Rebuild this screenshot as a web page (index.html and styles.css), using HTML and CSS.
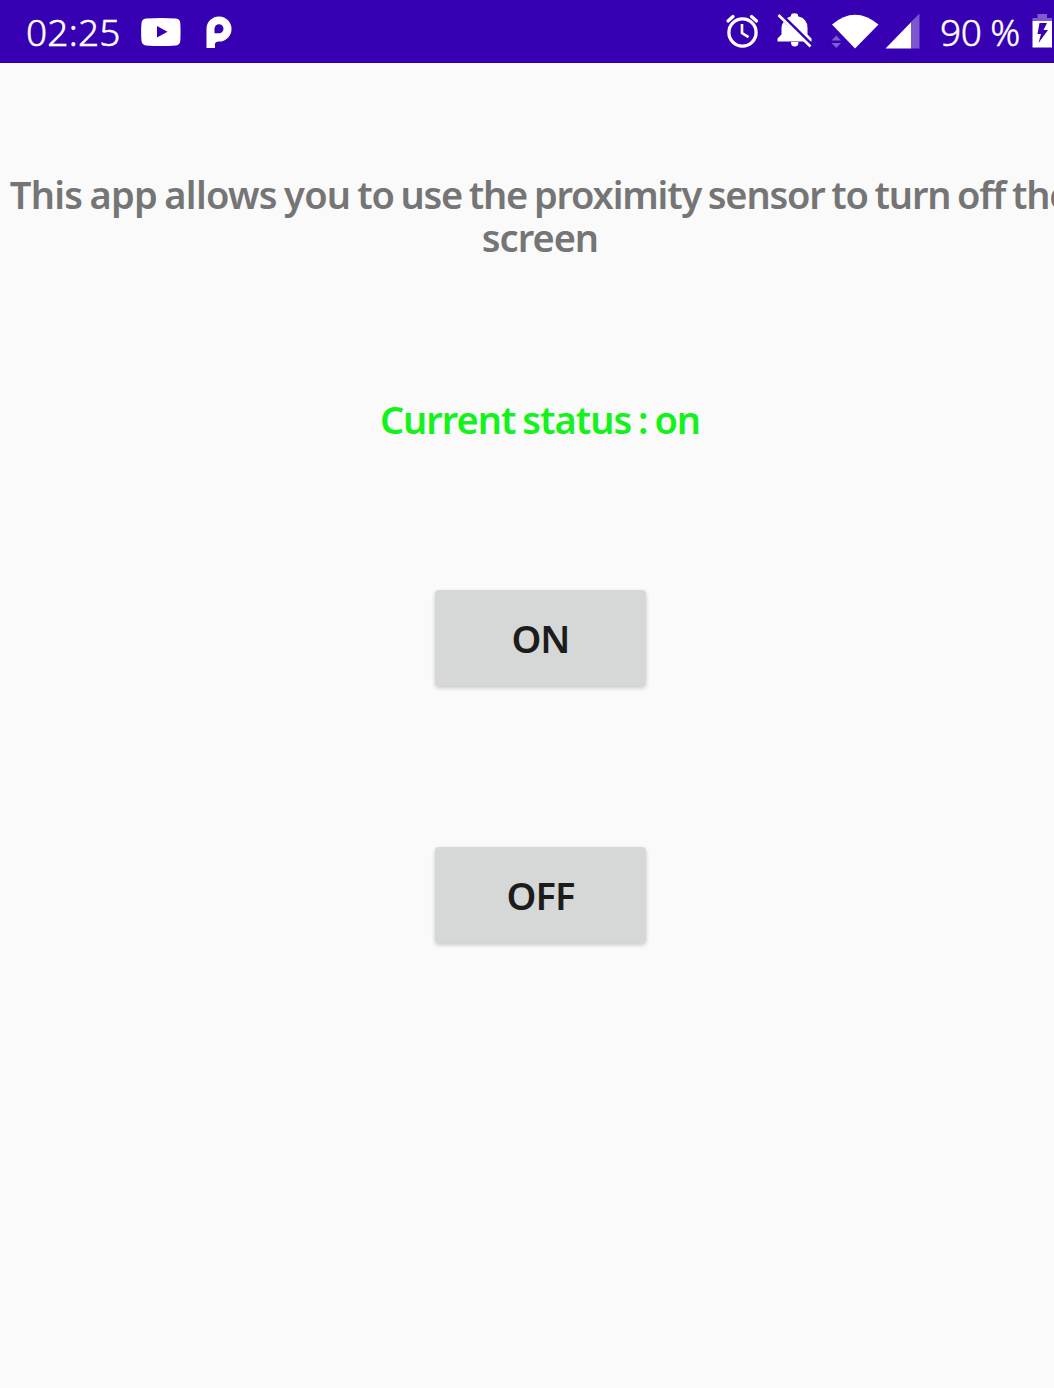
FILE: index.html
```html
<!DOCTYPE html>
<html lang="en">
<head>
<meta charset="utf-8">
<title>Proximity sensor</title>
<link rel="stylesheet" href="styles.css">
</head>
<body>
<div class="screen">
  <header class="status-bar">
    <span class="clock">02:25</span>
    <svg class="icon youtube" width="40" height="28" viewBox="0 0 40 28"><path fill="#fff" fill-rule="evenodd" d="M5 .6Q20-.5 35 .6 39 1 39.300 5 39.800 14 39.300 23 39 27 35 27.400 20 28.500 5 27.400 1 27 .5 23-.3 14 .5 5 1 1 5 .6ZM16 8V19.500L26.500 13.800Z"/></svg>
    <svg class="icon parking" width="26" height="33" viewBox="0 0 26 33"><path fill="#fff" fill-rule="evenodd" d="M.5 32V12.500A12.500 12.500 0 1 1 13 25.500Q9 25.500 9 28V32ZM13 8.200A4.500 4.500 0 0 0 8.500 12.700V17.200H13A4.500 4.500 0 0 0 13 8.200Z"/></svg>
    <span class="spacer"></span>
    <svg class="icon alarm" width="34" height="36" viewBox="0 0 34 36"><g fill="none" stroke="#fff" stroke-width="3.300"><circle cx="17.500" cy="19.500" r="13.600"/><path stroke-linecap="round" d="M3 8 8 3.500M26.500 3.500 31.500 8"/><path stroke-width="2.600" d="M17 11V20L23.500 24.200"/></g></svg>
    <svg class="icon bell" width="36" height="36" viewBox="0 0 36 36"><path fill="#fff" d="M6.500 9 29 28.500H.5V25.500L4.500 21.500V15Q4.500 11.500 6.500 9ZM9 6Q11.500 4 14 3.300V2.500Q14 .2 17.500.2T21 2.500V3.300Q30.500 5.500 30.500 15V21.500L34.500 25.500V28.500H31Z"/><path fill="#fff" d="M14 29H21.500Q21.500 33.500 17.700 33.500T14 29Z"/><path stroke="#3700b3" stroke-width="2.500" d="M4 1 35.500 32"/><path stroke="#fff" stroke-width="2.600" d="M1.500 2 33.500 33.500"/></svg>
    <svg class="icon wifi" width="48" height="36" viewBox="0 0 48 36"><path fill="#fff" d="M1 10.500Q24-9 47.500 10.500L24 34.500Z"/><path fill="#fff" opacity=".36" d="M.5 26.500 5.300 21.500 10 26.500ZM.5 29H10L5.300 34Z"/></svg>
    <svg class="icon signal" width="35" height="36" viewBox="0 0 35 36"><path fill="#fff" opacity=".34" d="M26 9 34.500.5V35.500H26Z"/><path fill="#fff" d="M.5 35.500 26 9.200V35.500Z"/></svg>
    <span class="percent">90 %</span>
    <svg class="icon battery" width="22" height="34" viewBox="0 0 22 34"><path fill="#fff" opacity=".36" d="M.5 7V4H5.500V0H15V4H20V7Z"/><path fill="#fff" fill-rule="evenodd" d="M.5 7H20V33.500H.5ZM7.500 9 5.500 20H9L6.500 29 16 16H11.500L15 9Z"/></svg>
  </header>
  <main class="content">
    <p class="description"><span class="lead">This app allows you</span><span class="rest"> to use the proximity sensor to turn off the</span><br>screen</p>
    <p class="current-status">Current status : on</p>
    <button class="button">ON</button>
    <button class="button">OFF</button>
  </main>
</div>
</body>
</html>
```
FILE: styles.css
```css
* { box-sizing: border-box; }
body {
  margin: 0;
  overflow: hidden;
  background: #fafafa;
  font-family: "Noto Sans", sans-serif;
}
.screen { width: 1080px; height: 1388px; }
.status-bar {
  display: flex;
  align-items: flex-start;
  height: 63px;
  padding-left: 26px;
  background: #3700b3;
  border-bottom: 1px solid #2b0090;
  color: #fff;
}
.icon { flex: none; display: block; }
.clock, .percent {
  flex: none;
  margin-top: 6px;
  font-size: 37px;
  line-height: 52px;
  font-weight: 300;
  -webkit-text-stroke: .5px #fff;
  white-space: nowrap;
}
.clock { width: 115px; letter-spacing: .2px; }
.percent { width: 92px; margin-left: 20px; letter-spacing: -.5px; }
.youtube { margin-top: 18px; }
.parking { margin: 16px 0 0 25px; }
.spacer { flex: 1; }
.alarm { margin: 13px 18px 0 0; }
.bell { margin: 13px 18px 0 0; }
.wifi { margin: 14px 6px 0 0; }
.signal { margin-top: 13px; }
.battery { margin: 14px 26px 0 0; }
.content {
  display: flex;
  flex-direction: column;
  align-items: center;
  padding-top: 110px;
  font-weight: 600;
  font-size: 38px;
  letter-spacing: -1px;
  word-spacing: -2px;
}
.description {
  margin: 0;
  color: #757575;
  line-height: 43px;
  text-align: center;
  white-space: nowrap;
}
.lead { letter-spacing: -.7px; }
.rest { letter-spacing: -1.17px; }
.current-status {
  margin: 139px 0 0;
  color: #13f31b;
  line-height: 43px;
  white-space: nowrap;
}
.button {
  width: 211px;
  height: 96px;
  margin: 149px 0 0 1px;
  padding: 0;
  border: 0;
  border-radius: 4px;
  background: #d6d7d7;
  box-shadow: 0 2px 4px rgba(0, 0, 0, .2);
  color: #1c1c1c;
  font: inherit;
  letter-spacing: -1px;
}
.button + .button { margin-top: 161px; }
```
